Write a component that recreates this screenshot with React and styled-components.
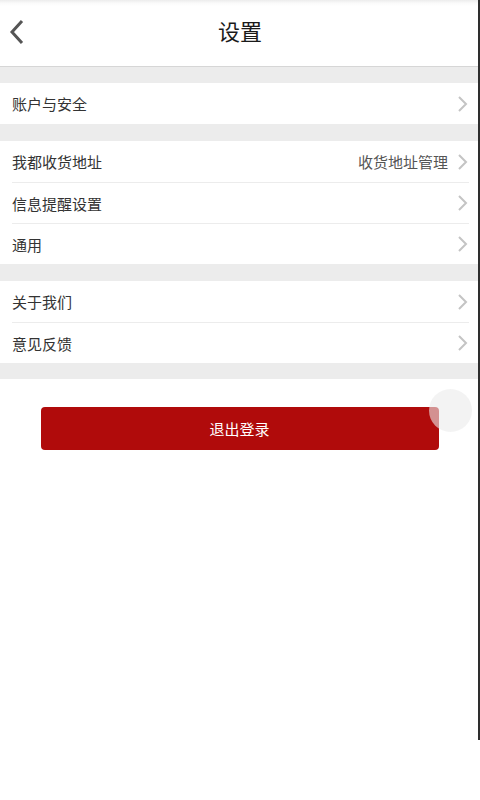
import React from "react";
import styled, { createGlobalStyle } from "styled-components";

const Global = createGlobalStyle`
  html, body { margin: 0; padding: 0; background: #fff; }
  body { font-family: "Noto Sans CJK SC", "Liberation Sans", sans-serif; }
  #root { min-height: 800px; }
`;

const Screen = styled.div`
  position: relative;
  width: 480px;
  height: 800px;
  background: #fff;
  display: flex;
  flex-direction: column;
`;

const EdgeLine = styled.div`
  position: absolute;
  right: 0;
  top: 0;
  width: 2px;
  height: 740px;
  background: #2e2e2e;
`;

const Header = styled.header`
  height: 67px;
  display: grid;
  grid-template-columns: 60px 1fr 60px;
  align-items: center;
  background: linear-gradient(#ececec 0px, #fafafa 3px, #fff 6px);
  border-bottom: 1px solid #d6d6d6;
  box-sizing: border-box;
  padding-bottom: 3px;
`;

const Back = styled.div`
  display: flex;
  align-items: center;
  padding-left: 8px;
`;

const Title = styled.h1`
  margin: 0 0 4px;
  text-align: center;
  font-size: 22px;
  font-weight: 400;
  color: #1a1a1a;
  line-height: 1;
`;

const Gap = styled.div`
  height: ${(p) => p.$h}px;
  background: #ececec;
`;

const Group = styled.section`
  background: #fff;
  display: flex;
  flex-direction: column;
`;

const Row = styled.div`
  height: 41px;
  display: flex;
  align-items: center;
  margin-left: 12px;
  margin-right: 11px;
  box-sizing: border-box;
  border-top: ${(p) => (p.$divider ? "1px solid #ececec" : "none")};
`;

const Label = styled.span`
  flex: 1;
  font-size: 15px;
  color: #333;
`;

const Extra = styled.span`
  font-size: 15px;
  color: #555;
  margin-right: 9px;
`;

const Footer = styled.div`
  display: flex;
  justify-content: center;
  padding-top: 28px;
  position: relative;
`;

const LogoutButton = styled.button`
  width: 398px;
  height: 43px;
  margin-left: -1px;
  border: none;
  border-radius: 4px;
  background: #b00b0b;
  color: #fff;
  font-family: "Noto Sans CJK SC", sans-serif;
  font-size: 15px;
`;

const FloatBall = styled.div`
  position: absolute;
  left: 429px;
  top: 10px;
  width: 43px;
  height: 43px;
  border-radius: 50%;
  background: rgba(235, 235, 235, 0.6);
`;

const Chevron = () => (
  <svg width="12" height="18" viewBox="0 0 12 18">
    <path d="M2 2 L9 9 L2 16" fill="none" stroke="#c4c4c4" strokeWidth="2" />
  </svg>
);

const BackIcon = () => (
  <svg width="18" height="28" viewBox="0 0 18 28">
    <path d="M14 3 L4 14 L14 25" fill="none" stroke="#555" strokeWidth="3" />
  </svg>
);

const groups = [
  [{ label: "账户与安全" }],
  [
    { label: "我都收货地址", extra: "收货地址管理" },
    { label: "信息提醒设置" },
    { label: "通用" },
  ],
  [{ label: "关于我们" }, { label: "意见反馈" }],
];

export default function App() {
  return (
    <>
      <Global />
      <Screen>
        <Header>
          <Back>
            <BackIcon />
          </Back>
          <Title>设置</Title>
          <div />
        </Header>
        {groups.map((g, gi) => (
          <React.Fragment key={gi}>
            <Gap $h={gi === 0 ? 16 : 17} />
            <Group>
              {g.map((r, ri) => (
                <Row key={r.label} $divider={ri > 0}>
                  <Label>{r.label}</Label>
                  {r.extra && <Extra>{r.extra}</Extra>}
                  <Chevron />
                </Row>
              ))}
            </Group>
          </React.Fragment>
        ))}
        <Gap $h={16} />
        <Footer>
          <LogoutButton>退出登录</LogoutButton>
          <FloatBall />
        </Footer>
        <EdgeLine />
      </Screen>
    </>
  );
}
